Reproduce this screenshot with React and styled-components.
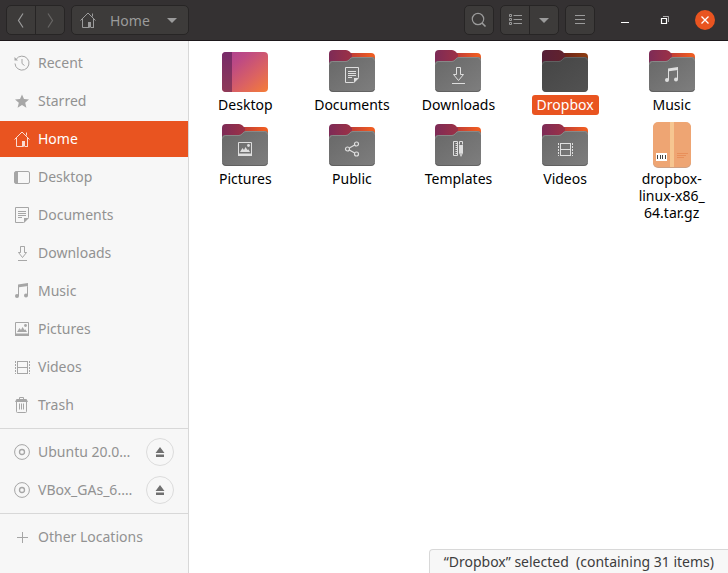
import React from 'react';
import styled, { createGlobalStyle, css } from 'styled-components';

const ORANGE = '#e95420';
const HEADER_BG = '#343132';
const BUTTON_BG = '#3d3b3a';
const BUTTON_BORDER = '#272525';
const HEADER_FG = '#9b9b9b';
const SIDEBAR_BG = '#f7f7f7';
const SIDEBAR_FG = '#929292';
const LINE = '#d8d8d8';

const GlobalStyle = createGlobalStyle`
  * {
    box-sizing: border-box;
  }

  body {
    margin: 0;
    font-family: 'Noto Sans', 'Open Sans', sans-serif;
    font-size: 14px;
    line-height: 17px;
  }

  button {
    font: inherit;
    color: inherit;
    margin: 0;
    padding: 0;
    border: 0;
    background: none;
  }

  svg {
    display: block;
    flex: none;
  }
`;

const Window = styled.div`
  display: flex;
  flex-direction: column;
  height: 100vh;
  background: #fff;
`;

const HeaderBar = styled.header`
  display: flex;
  align-items: center;
  gap: 6px;
  padding: 5px 3px 5px 6px;
  background: ${HEADER_BG};
  border-bottom: 1px solid #1d181b;
  color: ${HEADER_FG};
`;

const Linked = styled.div`
  display: flex;
  border: 1px solid ${BUTTON_BORDER};
  border-radius: 5px;
  background: ${BUTTON_BG};
`;

const HeaderButton = styled.button`
  display: flex;
  align-items: center;
  justify-content: center;
  width: 28px;
  height: 28px;

  & + & {
    width: 29px;
    border-left: 1px solid ${BUTTON_BORDER};
  }

  &:disabled {
    color: #686665;
  }
`;

const PathButton = styled.button`
  display: flex;
  align-items: center;
  gap: 14px;
  height: 28px;
  padding: 0 8px;
`;

const Spacer = styled.div`
  flex: 1;
`;

const WindowControls = styled.div`
  display: flex;
  margin-left: 4px;
`;

const WindowButton = styled.button`
  display: flex;
  align-items: center;
  justify-content: center;
  width: 40px;
  height: 30px;
  color: #fff;
`;

const Main = styled.div`
  position: relative;
  display: flex;
  flex: 1;
  min-height: 0;
`;

const Sidebar = styled.nav`
  flex: 0 0 189px;
  padding-top: 3px;
  overflow: hidden;
  background: ${SIDEBAR_BG};
  border-right: 1px solid ${LINE};
  color: ${SIDEBAR_FG};
`;

const Places = styled.ul`
  display: flex;
  flex-direction: column;
  gap: 2px;
  margin: 0;
  padding: 1px 0 0;
  list-style: none;

  & + & {
    margin-top: 5px;
    padding-top: 5px;
    border-top: 1px solid ${LINE};
  }
`;

const Place = styled.li`
  display: flex;
  align-items: center;
  height: 36px;
  padding: 0 14px;

  ${({ $active }) => $active && css`
    background: ${ORANGE};
    color: #fff;
  `}
`;

const PlaceLink = styled.a`
  display: flex;
  flex: 1;
  align-items: center;
  gap: 8px;
  color: inherit;
  text-decoration: none;
  white-space: nowrap;

  svg {
    opacity: 0.8;
  }
`;

const PlaceName = styled.span`
  padding-bottom: 2px;
`;

const EjectButton = styled.button`
  display: flex;
  align-items: center;
  justify-content: center;
  width: 28px;
  height: 28px;
  border: 1px solid #dcdcdc;
  border-radius: 50%;
  color: #707070;
`;

const Files = styled.main`
  display: grid;
  flex: 1;
  grid-template-columns: repeat(auto-fill, minmax(104px, 1fr));
  align-content: start;
  row-gap: 6px;
  padding: 6px 3px;
`;

const File = styled.button`
  display: flex;
  flex-direction: column;
  align-items: center;
  align-self: start;
`;

const FileName = styled.span`
  max-width: 96px;
  padding: 1px 5px 2px;
  border-radius: 3px;
  color: #000;
  white-space: pre-line;

  ${({ $selected }) => $selected && css`
    background: ${ORANGE};
    color: #fff;
  `}
`;

const StatusBar = styled.output`
  position: absolute;
  right: 0;
  bottom: 0;
  padding: 3px 14px;
  border: solid ${LINE};
  border-width: 1px 0 0 1px;
  border-top-left-radius: 4px;
  background: ${SIDEBAR_BG};
  color: #3d3d3d;
  white-space: pre;
`;

const glyphs = {
  recent: (
    <g fill="none" stroke="currentColor">
      <path d="M2.2 4.2A7 7 0 1 1 1 8.500" />
      <path d="M8 4v4.500l2.500 2" />
      <path d="M.5 2v3.500H4z" fill="currentColor" stroke="none" />
    </g>
  ),
  starred: (
    <path d="M8 1.500l2 4.600 5 .4-3.800 3.300 1.200 4.900L8 12.100l-4.400 2.600 1.200-4.900L1 6.500l5-.4z" fill="currentColor" />
  ),
  home: (
    <g fill="none" stroke="currentColor">
      <path d="M.5 8.500L8 1l7.500 7.500" />
      <path d="M2.500 7v8.500h7M13.500 7v8.500M12.500 1.500v3" />
      <path d="M8 10h3v5.500H8z" fill="currentColor" stroke="none" />
      <path d="M11 15.500h3" />
    </g>
  ),
  desktop: (
    <g>
      <rect x=".5" y="2.500" width="15" height="12" rx="1.500" fill="none" stroke="currentColor" />
      <path d="M1 3h3v11H1z" fill="currentColor" />
    </g>
  ),
  documents: (
    <g>
      <path d="M1.500.5h13v10l-5 5h-8z" fill="none" stroke="currentColor" />
      <path d="M4 4.500h8M4 6.500h8M4 8.500h8M4 10.500h4" stroke="currentColor" />
      <path d="M10 16v-5h5z" fill="currentColor" />
    </g>
  ),
  downloads: (
    <path d="M6.500 1.500h4v6h2l-4 5-4-5h2zM4 15.500h9" fill="none" stroke="currentColor" />
  ),
  downloadsWide: (
    <path d="M6.500.5h4v7h3l-5 6-5-6h3zM2 16.500h13" fill="none" stroke="currentColor" />
  ),
  music: (
    <g fill="currentColor">
      <path d="M4 1.500l10-1.500v3L5 4.300V13H4zM13 2h1v10.500h-1z" />
      <circle cx="3" cy="13" r="2" />
      <circle cx="12" cy="12.500" r="2" />
    </g>
  ),
  pictures: (
    <g>
      <path d="M1.500 1.500h13v12h-13z" fill="none" stroke="currentColor" />
      <path d="M1 12.500h14V15H1z" fill="currentColor" />
      <path d="M3 11l2.500-4L7 9l1.500-3 2 3 .8-.8L13 11z" fill="currentColor" />
      <circle cx="11.500" cy="4.500" r="1.400" fill="currentColor" />
    </g>
  ),
  videos: (
    <g fill="none" stroke="currentColor">
      <path d="M3.500 2v12M13.500 2v12M3 2.500h11M3 8.500h11M3 14.500h11" />
      <path d="M1.500 2v13M15.500 2v13" strokeDasharray="2 1" />
    </g>
  ),
  trash: (
    <g fill="none" stroke="currentColor">
      <path d="M5.500 2V.5h4V2" />
      <path d="M2.500 2h10L14 5H1z" fill="currentColor" stroke="none" />
      <path d="M2.500 5v9.500q0 1 1 1h8q1 0 1-1V5M5.500 6.500v6M7.500 6.500v6M9.500 6.500v6" />
    </g>
  ),
  disc: (
    <g fill="none" stroke="currentColor">
      <circle cx="8" cy="8" r="7.400" />
      <circle cx="8" cy="8" r="2.500" strokeWidth="1.300" />
    </g>
  ),
  plus: <path d="M3 8.500h11M8.500 3v11" stroke="currentColor" />,
  public: (
    <g fill="none" stroke="currentColor" strokeWidth="1.200">
      <circle cx="3.500" cy="8" r="2" />
      <circle cx="12.500" cy="3" r="2" />
      <circle cx="12.500" cy="13" r="2" />
      <path d="M5.300 7l5.400-3M5.300 9l5.400 3" />
    </g>
  ),
  templates: (
    <g>
      <path d="M3.500.5h4v14h-4z" fill="none" stroke="currentColor" />
      <path d="M5.500 2.500H8M5.500 4.500H8M5.500 6.500H8M5.500 8.500H8M5.500 10.500H8M5.500 12.500H8" stroke="currentColor" />
      <path d="M9 4h4v8l-2 4-2-4z" fill="currentColor" />
      <path d="M9.500 3.500v-3h3v3" fill="none" stroke="currentColor" />
      <path d="M10.500 12.500h1v1h-1z" fill="#777" />
    </g>
  ),
  back: <path d="M10 1.500L5.500 8.500l4.500 7" fill="none" stroke="currentColor" strokeWidth="1.200" />,
  forward: <path d="M6 1.500l4.500 7-4.500 7" fill="none" stroke="currentColor" strokeWidth="1.200" />,
  search: (
    <g fill="none" stroke="currentColor" strokeWidth="1.200">
      <circle cx="7" cy="7" r="5.700" />
      <path d="M11 11l3.500 3.500" strokeWidth="1.600" />
    </g>
  ),
  list: (
    <path
      d="M2.500 2.500h2v2h-2zM2.500 6.500h2v2h-2zM2.500 10.500h2v2h-2zM6.500 3.500H15M6.500 7.500H15M6.500 11.500H15"
      fill="none"
      stroke="currentColor"
    />
  ),
  arrow: <path d="M3 6h10l-5 5z" fill="currentColor" />,
  menu: <path d="M3 3.500h10M3 7.500h10M3 11.500h10" stroke="currentColor" />,
  minimize: <path d="M4 10.500h8" stroke="currentColor" />,
  restore: (
    <g fill="none" stroke="currentColor">
      <path d="M4.500 6.500h5v5h-5z" strokeWidth="1.200" />
      <path d="M6 4.500h5.500V10" opacity="0.600" />
    </g>
  ),
  eject: <path d="M8 3l4.500 6h-9zM4 10.500h8V13H4z" fill="currentColor" />,
};

const Icon = ({ name, ...rest }) => (
  <svg width="16" height="16" viewBox="0 0 16 16" overflow="visible" aria-hidden="true" {...rest}>
    {glyphs[name]}
  </svg>
);

const CloseIcon = () => (
  <svg width="20" height="20" viewBox="0 0 20 20" aria-hidden="true">
    <circle cx="10" cy="10" r="10" fill={ORANGE} />
    <path d="M6.500 6.500l7 7M13.500 6.500l-7 7" stroke="#fff" strokeWidth="1.300" />
  </svg>
);

const FolderIcon = ({ glyph, dark }) => {
  const id = dark ? 'dark' : 'light';
  return (
    <svg width="48" height="48" viewBox="0 0 48 48" aria-hidden="true">
      <defs>
        <linearGradient id={`back-${id}`}>
          <stop offset="0.400" stopColor={dark ? '#6e2418' : '#c43f35'} />
          <stop offset="0.900" stopColor={dark ? '#8a3a12' : '#ee5c22'} />
        </linearGradient>
        <linearGradient id={`tab-${id}`}>
          <stop offset="0" stopColor={dark ? '#561f38' : '#7d2b57'} />
          <stop offset="1" stopColor={dark ? '#62222c' : '#9d3145'} />
        </linearGradient>
        <linearGradient id={`front-${id}`} x1="0" y1="0" x2="1" y2="1">
          <stop offset="0" stopColor={dark ? '#454545' : '#686868'} />
          <stop offset="1" stopColor={dark ? '#525252' : '#7e7e7e'} />
        </linearGradient>
      </defs>
      <path d="M10 6h33q4 0 4 4v31H10z" fill={`url(#back-${id})`} />
      <path d="M1 7q0-4 4-4h13q2 0 3.500 1.500T24 7v5L1 41z" fill={`url(#tab-${id})`} />
      <path
        d="M1 17q0-3 3-3h14q2 0 3.500-2T25 10h19q3 0 3 3v28q0 4-4 4H5q-4 0-4-4z"
        fill={`url(#front-${id})`}
      />
      <path
        d="M1.500 17.500q0-3 3-3H18q2 0 3.500-2t3.500-2h18.500q3 0 3 3"
        fill="none"
        stroke={dark ? '#686868' : '#8f8f8f'}
        strokeWidth="0.800"
      />
      <path d="M1.500 42q.7 2.500 3.500 2.500h38q2.800 0 3.500-2.500" fill="none" stroke="#4b4b4b" strokeOpacity="0.500" />
      {glyph && <Icon name={glyph} x="16" y="20" color="#dedede" />}
    </svg>
  );
};

const DesktopIcon = () => (
  <svg width="48" height="48" viewBox="0 0 48 48" aria-hidden="true">
    <defs>
      <linearGradient id="desktop" x1="0" y1="0" x2="1" y2="1">
        <stop offset="0" stopColor="#aa3f92" />
        <stop offset="0.300" stopColor="#be4a83" />
        <stop offset="0.650" stopColor="#db6262" />
        <stop offset="1" stopColor="#f57d37" />
      </linearGradient>
      <linearGradient id="dock" x1="0" y1="0" x2="0" y2="1">
        <stop offset="0" stopColor="#772b69" />
        <stop offset="1" stopColor="#8e3a58" />
      </linearGradient>
    </defs>
    <rect x="1" y="5" width="46" height="40" rx="4" fill="url(#desktop)" />
    <path d="M11 5H5q-4 0-4 4v32q0 4 4 4h6z" fill="url(#dock)" />
  </svg>
);

const ArchiveIcon = () => (
  <svg width="48" height="48" viewBox="0 0 48 48" aria-hidden="true">
    <rect x="5" y="2" width="38" height="45" rx="5" fill="#cfa184" />
    <rect x="5" y="1" width="38" height="45" rx="5" fill="#eea573" />
    <path d="M22 1h4v45h-4z" fill="#f6c691" />
    <path d="M8 32h11v8H8z" fill="#fff" />
    <path d="M9.500 34v4M12.500 34v4M14.500 34v4M17.500 34v4" stroke="#444" />
    <path d="M29 32.500h11M29 34.500h9M29 36.500h7" stroke="#e88f5a" />
  </svg>
);

const places = [
  { icon: 'recent', name: 'Recent' },
  { icon: 'starred', name: 'Starred' },
  { icon: 'home', name: 'Home', active: true },
  { icon: 'desktop', name: 'Desktop' },
  { icon: 'documents', name: 'Documents' },
  { icon: 'downloads', name: 'Downloads' },
  { icon: 'music', name: 'Music' },
  { icon: 'pictures', name: 'Pictures' },
  { icon: 'videos', name: 'Videos' },
  { icon: 'trash', name: 'Trash' },
];

const drives = [
  { icon: 'disc', name: 'Ubuntu 20.0…', eject: true },
  { icon: 'disc', name: 'VBox_GAs_6.…', eject: true },
];

const other = [{ icon: 'plus', name: 'Other Locations' }];

const files = [
  { name: 'Desktop', icon: <DesktopIcon /> },
  { name: 'Documents', icon: <FolderIcon glyph="documents" /> },
  { name: 'Downloads', icon: <FolderIcon glyph="downloadsWide" /> },
  { name: 'Dropbox', icon: <FolderIcon dark />, selected: true },
  { name: 'Music', icon: <FolderIcon glyph="music" /> },
  { name: 'Pictures', icon: <FolderIcon glyph="pictures" /> },
  { name: 'Public', icon: <FolderIcon glyph="public" /> },
  { name: 'Templates', icon: <FolderIcon glyph="templates" /> },
  { name: 'Videos', icon: <FolderIcon glyph="videos" /> },
  { name: 'dropbox-\nlinux-x86_\n64.tar.gz', icon: <ArchiveIcon /> },
];

const PlaceList = ({ items }) => (
  <Places>
    {items.map(({ icon, name, active, eject }) => (
      <Place key={name} $active={active}>
        <PlaceLink href="#">
          <Icon name={icon} />
          <PlaceName>{name}</PlaceName>
        </PlaceLink>
        {eject && (
          <EjectButton aria-label="Eject">
            <Icon name="eject" />
          </EjectButton>
        )}
      </Place>
    ))}
  </Places>
);

const App = () => (
  <Window>
    <GlobalStyle />
    <HeaderBar>
      <Linked>
        <HeaderButton aria-label="Back"><Icon name="back" /></HeaderButton>
        <HeaderButton aria-label="Forward" disabled><Icon name="forward" /></HeaderButton>
      </Linked>
      <Linked>
        <PathButton>
          <Icon name="home" />
          Home
          <Icon name="arrow" />
        </PathButton>
      </Linked>
      <Spacer />
      <Linked>
        <HeaderButton aria-label="Search"><Icon name="search" /></HeaderButton>
      </Linked>
      <Linked>
        <HeaderButton aria-label="List view"><Icon name="list" /></HeaderButton>
        <HeaderButton aria-label="View options"><Icon name="arrow" /></HeaderButton>
      </Linked>
      <Linked>
        <HeaderButton aria-label="Menu"><Icon name="menu" /></HeaderButton>
      </Linked>
      <WindowControls>
        <WindowButton aria-label="Minimize"><Icon name="minimize" /></WindowButton>
        <WindowButton aria-label="Restore"><Icon name="restore" /></WindowButton>
        <WindowButton aria-label="Close"><CloseIcon /></WindowButton>
      </WindowControls>
    </HeaderBar>
    <Main>
      <Sidebar>
        <PlaceList items={places} />
        <PlaceList items={drives} />
        <PlaceList items={other} />
      </Sidebar>
      <Files>
        {files.map(({ name, icon, selected }) => (
          <File key={name}>
            {icon}
            <FileName $selected={selected}>{name}</FileName>
          </File>
        ))}
      </Files>
      <StatusBar>“Dropbox” selected  (containing 31 items)</StatusBar>
    </Main>
  </Window>
);

export default App;
